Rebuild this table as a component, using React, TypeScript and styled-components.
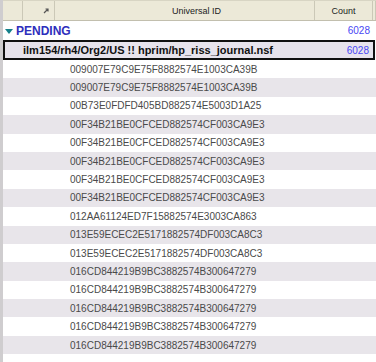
import styled, { createGlobalStyle } from "styled-components";

const GlobalStyle = createGlobalStyle`
  html, body {
    margin: 0;
    padding: 0;
    background: #ffffff;
  }
  body {
    font-family: "Liberation Sans", Arial, sans-serif;
    overflow: hidden;
  }
`;

const View = styled.div`
  width: 376px;
  height: 362px;
  overflow: hidden;
  border-left: 3px solid #cfcdcf;
  box-sizing: border-box;
  background: #ffffff;
`;

const HeaderRow = styled.div`
  display: grid;
  grid-template-columns: 20px 32px 1fr 58px 3px;
  height: 21px;
  background: #ece9d8;
  border-top: 1px solid #d8d5c4;
  border-bottom: 1px solid #c2bfae;
  box-sizing: border-box;
`;

const HeaderCell = styled.div<{ $align?: string; $shift?: number }>`
  display: flex;
  align-items: center;
  justify-content: ${(p) => p.$align || "center"};
  padding-left: ${(p) => p.$shift || 0}px;
  border-right: 1px solid #cbc8b7;
  font-size: 9px;
  color: #222;
`;

const CategoryRow = styled.div`
  display: flex;
  align-items: center;
  height: 19px;
  padding: 0 6px 0 2px;
`;

const Twisty = styled.span`
  width: 0;
  height: 0;
  border-left: 4px solid transparent;
  border-right: 4px solid transparent;
  border-top: 5px solid #14808a;
  margin: 1px 3px 0 0;
`;

const CategoryLabel = styled.span`
  flex: 1;
  font-size: 12px;
  font-weight: bold;
  color: #2e2ebc;
`;

const Count = styled.span`
  font-size: 10px;
  color: #4848f4;
`;

const DocRow = styled.div`
  display: flex;
  align-items: center;
  height: 20px;
  margin-right: 1px;
  padding: 0 4px 0 18px;
  border: 2px solid #111;
  background: #e7e3ec;
  box-sizing: border-box;
`;

const DocTitle = styled.span`
  flex: 1;
  font-size: 11px;
  font-weight: bold;
  color: #111;
`;

const DataRow = styled.div<{ $alt: boolean }>`
  display: flex;
  align-items: center;
  height: 18.4px;
  padding-left: 67px;
  background: ${(p) => (p.$alt ? "#e8e5ea" : "#ffffff")};
  font-size: 10px;
  color: #4a4a4a;
`;

const SortIcon = () => (
  <svg width="6" height="6" viewBox="0 0 6 6">
    <path d="M1 5 L5 1 M2.5 1 H5 V3.5" stroke="#555" strokeWidth="1.2" fill="none" />
  </svg>
);

const ids = [
  "009007E79C9E75F8882574E1003CA39B",
  "009007E79C9E75F8882574E1003CA39B",
  "00B73E0FDFD405BD882574E5003D1A25",
  "00F34B21BE0CFCED882574CF003CA9E3",
  "00F34B21BE0CFCED882574CF003CA9E3",
  "00F34B21BE0CFCED882574CF003CA9E3",
  "00F34B21BE0CFCED882574CF003CA9E3",
  "00F34B21BE0CFCED882574CF003CA9E3",
  "012AA61124ED7F15882574E3003CA863",
  "013E59ECEC2E5171882574DF003CA8C3",
  "013E59ECEC2E5171882574DF003CA8C3",
  "016CD844219B9BC3882574B300647279",
  "016CD844219B9BC3882574B300647279",
  "016CD844219B9BC3882574B300647279",
  "016CD844219B9BC3882574B300647279",
  "016CD844219B9BC3882574B300647279",
];

export default function App() {
  return (
    <View>
      <GlobalStyle />
      <HeaderRow>
        <HeaderCell />
        <HeaderCell $align="flex-end" style={{ paddingRight: 5 }}>
          <SortIcon />
        </HeaderCell>
        <HeaderCell $shift={24}>Universal ID</HeaderCell>
        <HeaderCell>Count</HeaderCell>
        <HeaderCell />
      </HeaderRow>
      <CategoryRow>
        <Twisty />
        <CategoryLabel>PENDING</CategoryLabel>
        <Count>6028</Count>
      </CategoryRow>
      <DocRow>
        <DocTitle>ilm154/rh4/Org2/US !! hprim/hp_riss_journal.nsf</DocTitle>
        <Count>6028</Count>
      </DocRow>
      {ids.map((id, i) => (
        <DataRow key={i} $alt={i % 2 === 1}>
          {id}
        </DataRow>
      ))}
    </View>
  );
}
